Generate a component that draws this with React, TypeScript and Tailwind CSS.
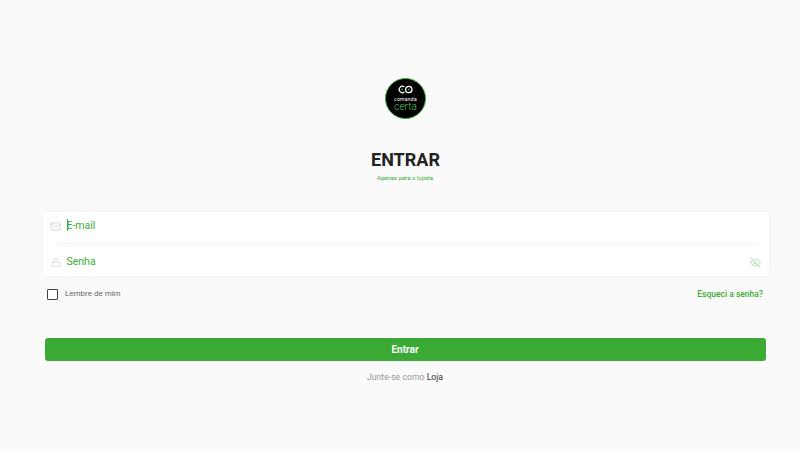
import { Mail, Lock, EyeOff } from "lucide-react";

const font = { fontFamily: "Roboto, sans-serif" };

function Logo() {
  return (
    <div className="w-[41px] h-[41px] rounded-full bg-black border border-[#3aaa35] flex flex-col items-center leading-none text-white overflow-hidden">
      <svg width="15" height="9" viewBox="0 0 15 9" className="mt-[6px]" fill="none" stroke="#fff" strokeWidth="1.3">
        <path d="M6.4 2A3.2 3.2 0 1 0 6.4 7" />
        <circle cx="10.8" cy="4.5" r="3.2" />
        <circle cx="10.8" cy="4.5" r="0.9" fill="#3aaa35" stroke="none" />
        <circle cx="4" cy="4.5" r="0.9" fill="#3aaa35" stroke="none" />
      </svg>
      <span className="text-[5px] mt-[2px] leading-[6px] whitespace-nowrap tracking-[0.3px]">comanda</span>
      <span className="text-[10px] leading-[9px] text-[#57c84f] font-light">certa</span>
    </div>
  );
}

export default function App() {
  return (
    <div style={font} className="w-[800px] h-[449px] bg-[#fafafa] pl-[10px] flex flex-col items-center overflow-hidden">
      <div className="mt-[78px] ml-[1px]"><Logo /></div>
      <h1 className="mt-[29px] ml-[1px] text-[18px] leading-[24px] font-bold text-[#222222]">ENTRAR</h1>
      <p className="mt-[2px] text-[6px] leading-[8px] text-[#3aaa35]">Apenas para o lojista</p>

      <div className="mt-[30px] w-[726px] ml-[1px] h-[64px] bg-white rounded-[2px] shadow-[0_0_4px_rgba(0,0,0,0.05)] flex flex-col">
        <div className="h-[31px] pl-[7px] pt-[7px] flex">
          <Mail className="w-[11px] h-[11px] mt-[2px] text-[#c8c8c8]" strokeWidth={1.5} />
          <span className="ml-[6px] text-[10.5px] leading-[14px] text-[#3aaa35] relative">
            <span className="absolute left-0 top-0 w-px h-[12px] bg-[#3aaa35]" />E-mail
          </span>
        </div>
        <div className="mx-[12px] h-px bg-[#f2f2f2]" />
        <div className="flex-1 flex items-start px-[8px] pt-[11px]">
          <Lock className="w-[10px] h-[11px] mt-[2px] text-[#cfcfcf]" strokeWidth={1.5} />
          <span className="ml-[6px] text-[10.5px] leading-[14px] text-[#3aaa35]">Senha</span>
          <EyeOff className="ml-auto w-[11px] h-[11px] mt-[2px] text-[#bfe3bd]" strokeWidth={2.5} />
        </div>
      </div>

      <div className="mt-[12px] w-[716px] flex items-center justify-between">
        <label className="flex items-center">
          <span className="w-[11px] h-[11px] border border-[#444444] rounded-[1px] bg-white" />
          <span className="ml-[7px] text-[8px] leading-[12px] text-[#666666]">Lembre de mim</span>
        </label>
        <a className="text-[8.5px] leading-[12px] font-medium text-[#3aaa35]">Esqueci a senha?</a>
      </div>

      <button className="mt-[38px] w-[721px] h-[23px] rounded-[3px] bg-[#3aaa35] text-white text-[10px] font-bold">Entrar</button>

      <p className="mt-[10px] text-[8.7px] leading-[12px] text-[#999999]">
        Junte-se como <span className="text-[#333333]">Loja</span>
      </p>
    </div>
  );
}
